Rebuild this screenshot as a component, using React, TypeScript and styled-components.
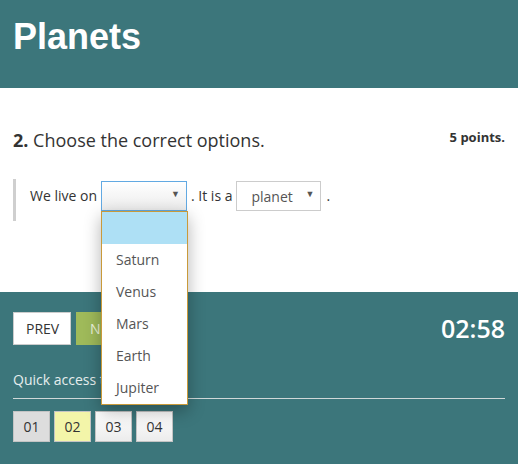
import React from "react";
import styled, { createGlobalStyle } from "styled-components";

const Global = createGlobalStyle`
  html, body { margin: 0; padding: 0; background: #ffffff; }
  body { font-family: "Open Sans", "Liberation Sans", sans-serif; color: #333; }
  * { box-sizing: border-box; }
`;

const Page = styled.div`
  width: 518px;
  height: 464px;
  display: flex;
  flex-direction: column;
  overflow: hidden;
`;

const Header = styled.header`
  height: 88px;
  background: #3c767b;
  padding: 19px 13px 0;
`;

const Title = styled.h1`
  margin: 0;
  font-family: "Liberation Sans", Arial, sans-serif;
  font-weight: 700;
  font-size: 36px;
  line-height: 36px;
  color: #ffffff;
`;

const Main = styled.main`
  height: 204px;
  padding: 40px 13px 0;
  position: relative;
  z-index: 2;
`;

const QuestionRow = styled.div`
  display: flex;
  justify-content: space-between;
  align-items: center;
  height: 24px;
`;

const Question = styled.div`
  font-size: 18px;
  line-height: 24px;
  color: #333;
  b { font-weight: 700; }
`;

const Points = styled.div`
  font-size: 13px;
  font-weight: 700;
  color: #333;
  margin-top: -6px;
`;

const Sentence = styled.div`
  margin-top: 27px;
  height: 42px;
  border-left: 3px solid #cfcfcf;
  padding: 2px 0 0 14px;
  display: flex;
  align-items: flex-start;
  font-size: 14px;
  color: #333;
`;

const Words = styled.span<{ $gap?: number }>`
  line-height: 30px;
  margin: 0 ${(p) => p.$gap ?? 4}px;
  &:first-child { margin-left: 0; }
`;

const SelectWrap = styled.div`
  position: relative;
`;

const SelectBox = styled.div<{ $w: number; $focus?: boolean }>`
  width: ${(p) => p.$w}px;
  height: 30px;
  border: 1px solid ${(p) => (p.$focus ? "#62a9e2" : "#cccccc")};
  background: ${(p) => (p.$focus ? "linear-gradient(#ffffff, #ececec)" : "#ffffff")};
  padding: 0 0 0 14px;
  display: flex;
  align-items: center;
  justify-content: space-between;
  font-size: 14px;
  color: #555;
  position: relative;
`;

const Arrow = styled.span`
  font-size: 9px;
  color: #555;
  margin-right: 6px;
  margin-top: -6px;
`;

const Menu = styled.ul`
  position: absolute;
  top: 100%;
  left: 0;
  width: 87px;
  margin: 0;
  padding: 0;
  list-style: none;
  background: #ffffff;
  border: 1px solid #c99a3a;
  box-shadow: 0 6px 16px rgba(0, 0, 0, 0.3);
  z-index: 10;
`;

const MenuItem = styled.li<{ $active?: boolean }>`
  height: 32px;
  line-height: 32px;
  padding-left: 14px;
  font-size: 14px;
  color: #555;
  background: ${(p) => (p.$active ? "#aee0f5" : "#ffffff")};
`;

const Footer = styled.footer`
  flex: 1;
  background: #3c767b;
  padding: 20px 13px 0;
`;

const NavRow = styled.div`
  display: flex;
  align-items: center;
  justify-content: space-between;
`;

const NavButtons = styled.div`
  display: flex;
  gap: 5px;
`;

const NavButton = styled.button<{ $primary?: boolean }>`
  height: 33px;
  padding: 0 12px;
  font-family: "Open Sans", sans-serif;
  font-size: 14px;
  border: 1px solid ${(p) => (p.$primary ? "#9fba5a" : "#cccccc")};
  background: ${(p) => (p.$primary ? "#9fba5a" : "#ffffff")};
  color: ${(p) => (p.$primary ? "#eef4dc" : "#333")};
  width: ${(p) => (p.$primary ? "62px" : "58px")};
`;

const Timer = styled.div`
  font-size: 25px;
  font-weight: 600;
  color: #ffffff;
  line-height: 33px;
`;

const QuickLabel = styled.div`
  margin-top: 25px;
  font-size: 14px;
  line-height: 20px;
  color: #e6eeee;
  padding-bottom: 8px;
  border-bottom: 1px solid #d0d8d8;
`;

const QuickRow = styled.div`
  margin-top: 12px;
  display: flex;
  gap: 4px;
`;

const QuickButton = styled.button<{ $state: "done" | "current" | "todo" }>`
  width: 37px;
  height: 31px;
  font-family: "Open Sans", sans-serif;
  font-size: 14px;
  color: #333;
  border: 1px solid #c4c4c4;
  padding: 0;
  background: ${(p) =>
    p.$state === "done"
      ? "#dddddd"
      : p.$state === "current"
      ? "#f3f5a9"
      : "linear-gradient(#ffffff, #ececec)"};
`;

const planets = ["", "Saturn", "Venus", "Mars", "Earth", "Jupiter"];

export default function App() {
  return (
    <>
      <Global />
      <Page>
        <Header>
          <Title>Planets</Title>
        </Header>
        <Main>
          <QuestionRow>
            <Question>
              <b>2.</b> Choose the correct options.
            </Question>
            <Points>5 points.</Points>
          </QuestionRow>
          <Sentence>
            <Words $gap={4}>We live on</Words>
            <SelectWrap>
              <SelectBox $w={86} $focus>
                <span />
                <Arrow>▼</Arrow>
              </SelectBox>
              <Menu>
                {planets.map((p, i) => (
                  <MenuItem key={i} $active={i === 0}>
                    {p}
                  </MenuItem>
                ))}
              </Menu>
            </SelectWrap>
            <Words $gap={4}>. It is a</Words>
            <SelectWrap>
              <SelectBox $w={85}>
                <span>planet</span>
                <Arrow>▼</Arrow>
              </SelectBox>
            </SelectWrap>
            <Words $gap={5}>.</Words>
          </Sentence>
        </Main>
        <Footer>
          <NavRow>
            <NavButtons>
              <NavButton>PREV</NavButton>
              <NavButton $primary>NEXT</NavButton>
            </NavButtons>
            <Timer>02:58</Timer>
          </NavRow>
          <QuickLabel>Quick access to questions:</QuickLabel>
          <QuickRow>
            <QuickButton $state="done">01</QuickButton>
            <QuickButton $state="current">02</QuickButton>
            <QuickButton $state="todo">03</QuickButton>
            <QuickButton $state="todo">04</QuickButton>
          </QuickRow>
        </Footer>
      </Page>
    </>
  );
}
